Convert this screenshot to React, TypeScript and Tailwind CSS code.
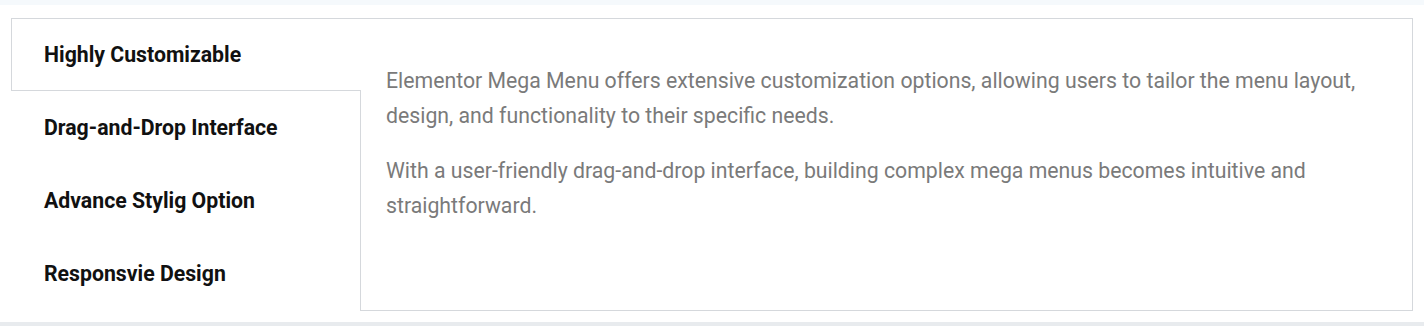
import { useState } from "react";

const tabs = [
  "Highly Customizable",
  "Drag-and-Drop Interface",
  "Advance Stylig Option",
  "Responsvie Design",
];

export default function App() {
  const [active, setActive] = useState(0);

  return (
    <div className="w-full h-[326px] bg-white flex flex-col font-['Roboto',sans-serif]">
      <div className="h-[5px] bg-[#f5f9fc]" />
      <div className="flex-1 px-[11px] pt-[13px]">
        <div className="flex h-[293px]">
          <div className="w-[349px] flex flex-col">
            {tabs.map((t, i) => (
              <button
                key={t}
                onClick={() => setActive(i)}
                className={
                  i === active
                    ? "relative z-10 -mr-px h-[73px] w-[350px] bg-white border-t border-l border-b border-[#d5d8dc] text-left pl-[32px] pt-[1px] text-[21.25px] font-bold text-[#111] leading-none"
                    : "h-[73px] text-left pl-[33px] pt-[1px] text-[21.25px] font-bold text-[#111] leading-none"
                }
              >
                {t}
              </button>
            ))}
          </div>
          <div className="flex-1 border border-[#d5d8dc] pl-[25px] pr-[24px] pt-[44px] text-[21.25px] leading-[35px] text-[#7a7a7a]">
            <p className="mb-[20px]">
              Elementor Mega Menu offers extensive customization options, allowing users to tailor the menu layout, design, and functionality to their specific needs.
            </p>
            <p>
              With a user-friendly drag-and-drop interface, building complex mega menus becomes intuitive and straightforward.
            </p>
          </div>
        </div>
      </div>
      <div className="h-[4px] bg-[#e8ebee]" />
    </div>
  );
}
